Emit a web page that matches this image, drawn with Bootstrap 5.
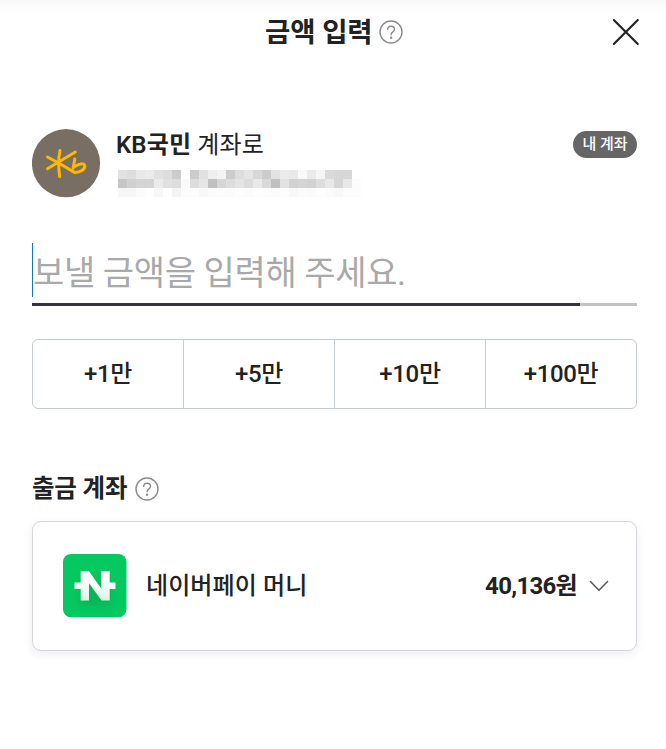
<!DOCTYPE html>
<html lang="ko">
<head>
<meta charset="utf-8">
<meta name="viewport" content="width=device-width, initial-scale=1">
<title>금액 입력</title>
<link href="https://cdn.jsdelivr.net/npm/bootstrap@5.3.0/dist/css/bootstrap.min.css" rel="stylesheet">
<style>
body{font-family:Roboto,"Noto Sans CJK KR",sans-serif;color:#222;background:#fff;height:749px;overflow:hidden}
.screen{padding:0 26px 0 32px;background:linear-gradient(#f8f8f8,#fff 14px)}
.screen-head{height:63px}
.screen-title{font-size:27.5px;line-height:40px;font-weight:700;white-space:nowrap;letter-spacing:-.1px;padding-top:2px}
.title-group{margin-left:233px}
.title-group .q-icon{margin-left:6px}
.close-btn{width:28px;height:28px}
.close-btn svg,.q-icon,.chev,.bank-logo,.pay-logo{display:block;flex:none}
.payee{margin-top:66px;height:69px}
.payee-text{margin-left:15px}
.payee-name{font-size:24px;line-height:32px;white-space:nowrap;letter-spacing:.15px}
.masked{display:grid;grid-template-columns:repeat(27,9px);grid-auto-rows:9px;margin:9px 0 0 2px}
.own-badge{width:64px;height:27px;margin-top:2px;font-size:15px;line-height:27px;font-weight:500;background:#666}
.amount-field{margin-top:45px;height:64px}
.amount-input{font-size:34px;line-height:60px;height:54px;border-left:1px solid #1478b4;color:#a9a9a9;white-space:nowrap;letter-spacing:-.38px}
.amount-line{height:3px;margin-top:6px;background:#c2c2c2}
.amount-line div{width:548px;height:3px;background:#34343c}
.quick{margin-top:32px;height:70px;border:1px solid #c7ccd1;border-radius:6px}
.quick .btn{font-size:24px;font-weight:500;color:#222;border:0;border-radius:0;padding:0;width:151px;letter-spacing:-.35px}
.quick .btn:first-child{width:150px}
.quick .btn+.btn{border-left:1px solid #c7ccd1}
.source-head{margin-top:60px;height:40px}
.source-title{font-size:24.5px;line-height:40px;font-weight:700;white-space:nowrap;letter-spacing:-.2px}
.source-card{margin-top:12px;height:130px;border:1px solid #d5d6d9;border-radius:9px;padding:0 27px 0 30px;box-shadow:0 3px 10px rgba(50,50,120,.09)}
.source-name{font-size:24px;font-weight:500;margin-left:19px;white-space:nowrap;letter-spacing:.1px}
.source-sum{font-size:24px;font-weight:700;white-space:nowrap;letter-spacing:-.7px}
.chev{margin-left:12px}
.body-w{width:605px}
</style>
</head>
<body>
<main class="screen">
  <header class="screen-head d-flex align-items-center">
    <div class="title-group d-flex align-items-center">
      <h1 class="screen-title mb-0">금액 입력</h1>
      <svg class="q-icon" width="24" height="24" viewBox="0 0 24 24" fill="none" stroke="#8b8b8b" stroke-width="1.4"><circle cx="12" cy="12" r="11"/><path d="M8.700 9.400c0-4.200 6.800-4 6.800-.2 0 2.700-3.400 2.700-3.400 5.600" stroke-linecap="round"/><circle cx="12.100" cy="17.800" r=".5" fill="#8b8b8b"/></svg>
    </div>
    <button type="button" class="close-btn btn p-0 border-0 ms-auto" aria-label="닫기">
      <svg width="28" height="28" viewBox="0 0 28 28" stroke="#222" stroke-width="2.100" stroke-linecap="round"><path d="M1.800 2l24 24M25.800 2L1.800 26"/></svg>
    </button>
  </header>

  <div class="body-w">
    <section class="payee d-flex align-items-start">
      <svg class="bank-logo" width="69" height="69" viewBox="0 0 69 69"><circle cx="34" cy="34.200" r="34.100" fill="#796e64"/><g fill="none" stroke="#ffb800" stroke-width="3" stroke-linecap="round" stroke-linejoin="round"><path d="M28 21.500q-2.500 12-.3 26M15.500 28l11.500 6.200 15.500 9.200c6 .3 10.500-3.200 10.300-6.400-.4-3.800-6.500-2-10 .6M43.300 23L27 32.800 15.500 39.800M42.800 30l-1.600 9"/></g></svg>
      <div class="payee-text">
        <div class="payee-name"><span class="fw-semibold">KB국민</span> 계좌로</div>
        <div class="masked" id="masked"></div>
      </div>
      <span class="own-badge ms-auto rounded-pill text-white text-center">내 계좌</span>
    </section>

    <section class="amount-field">
      <div class="amount-input">보낼 금액을 입력해 주세요.</div>
      <div class="amount-line"><div></div></div>
    </section>

    <div class="quick d-flex">
      <button type="button" class="btn">+1만</button>
      <button type="button" class="btn">+5만</button>
      <button type="button" class="btn">+10만</button>
      <button type="button" class="btn">+100만</button>
    </div>

    <div class="source-head d-flex align-items-center">
      <h2 class="source-title mb-0">출금 계좌</h2>
      <svg class="q-icon ms-2" width="24" height="24" viewBox="0 0 24 24" fill="none" stroke="#8b8b8b" stroke-width="1.4"><circle cx="12" cy="12" r="11"/><path d="M8.700 9.400c0-4.200 6.800-4 6.800-.2 0 2.700-3.400 2.700-3.400 5.600" stroke-linecap="round"/><circle cx="12.100" cy="17.800" r=".5" fill="#8b8b8b"/></svg>
    </div>

    <div class="source-card d-flex align-items-center bg-white">
      <svg class="pay-logo" width="64" height="64" viewBox="0 0 64 64"><defs><linearGradient id="ng" x1="0" y1="0" x2="0" y2="1"><stop offset=".3" stop-color="#fff"/><stop offset="1" stop-color="#d8f6e5"/></linearGradient><filter id="sh" x="-30%" y="-30%" width="160%" height="180%"><feGaussianBlur stdDeviation="4"/></filter></defs><rect width="63.500" height="63.300" rx="8" fill="#06c860"/><path d="M17 25h31v27H17z" fill="#008a40" opacity=".28" filter="url(#sh)"/><path d="M17.700 17.300H26L38.300 34.500V17.300H46.700V28.500H52.500V35H46.700V46.500H38.600L26 29.300V46.500H17.700V35H11.500V28.500H17.700Z" fill="url(#ng)"/></svg>
      <span class="source-name">네이버페이 머니</span>
      <span class="source-sum ms-auto">40,136원</span>
      <svg class="chev" width="20" height="12" viewBox="0 0 20 12" fill="none" stroke="#555" stroke-width="1.500" stroke-linecap="round" stroke-linejoin="round"><path d="M1.500 1.500L10 10.300 18.500 1.500"/></svg>
    </div>
  </div>
</main>
<script src="https://cdn.jsdelivr.net/npm/bootstrap@5.3.0/dist/js/bootstrap.bundle.min.js"></script>
<script>
// Grey levels of the masked account number, one hex pair per tile.
const tiles = [
  'e1 dd e8 eb e1 dd cc ff cc e1 ee f4 cc dd e5 d7 cc e3 eb e9 f9 ea f6 d9 d7 d7 ff',
  'c6 d0 d4 d4 eb e1 dd fa dd e6 c0 d6 dd e4 dc e9 d9 c0 e2 d1 d4 d2 dd e8 d6 e8 fc',
  'f6 f6 fb fe f7 fe f4 fc fc f8 fb fc fb fd fb fd fc fb fd f8 fb fa fd fb f8 fc fc'
];
const box = document.getElementById('masked');
tiles.join(' ').split(' ').forEach(g => {
  const t = document.createElement('span');
  t.style.backgroundColor = '#' + g + g + g;
  box.append(t);
});
</script>
</body>
</html>
